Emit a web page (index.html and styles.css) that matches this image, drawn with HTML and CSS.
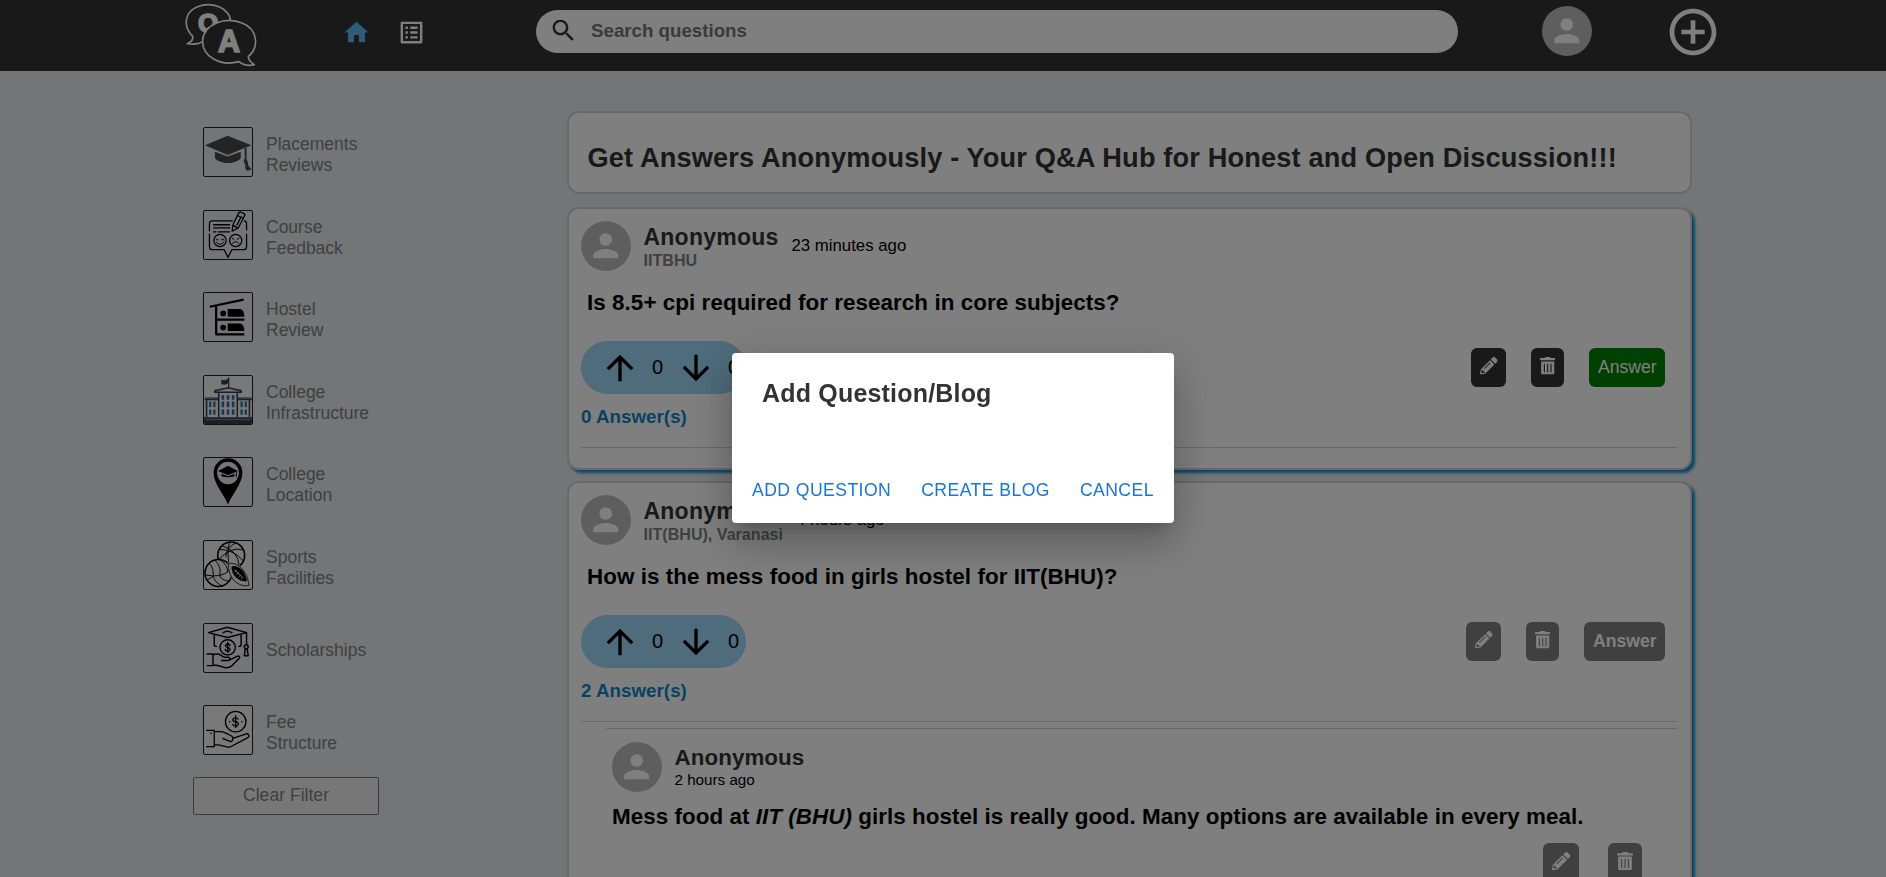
FILE: index.html
```html
<!DOCTYPE html>
<html lang="en">
<head>
<meta charset="utf-8">
<title>Q&amp;A Hub</title>
<link rel="stylesheet" href="styles.css">
</head>
<body>
<svg class="defs" aria-hidden="true">
  <symbol id="person" viewBox="0 0 24 24"><path d="M12 12c2.21 0 4-1.79 4-4s-1.79-4-4-4-4 1.79-4 4 1.79 4 4 4zm0 2c-2.67 0-8 1.34-8 4v2h16v-2c0-2.66-5.33-4-8-4z"/></symbol>
  <symbol id="up" viewBox="0 0 24 24"><path d="m4 12 1.41 1.41L11 7.83V20h2V7.83l5.58 5.59L20 12l-8-8-8 8z"/></symbol>
  <symbol id="down" viewBox="0 0 24 24"><path d="m20 12-1.41-1.41L13 16.17V4h-2v12.17l-5.58-5.59L4 12l8 8 8-8z"/></symbol>
  <symbol id="pencil" viewBox="0 0 512 512"><path d="M497.9 142.1l-46.1 46.1c-4.7 4.7-12.3 4.7-17 0l-111-111c-4.7-4.7-4.7-12.3 0-17l46.1-46.1c18.7-18.7 49.1-18.7 67.9 0l60.1 60.1c18.8 18.7 18.8 49.1 0 67.9zM284.2 99.8L21.6 362.4.4 483.9c-2.9 16.4 11.4 30.6 27.8 27.8l121.5-21.3 262.6-262.6c4.7-4.7 4.7-12.3 0-17l-111-111c-4.8-4.7-12.4-4.7-17.1 0zM124.1 339.9c-5.5-5.5-5.5-14.3 0-19.8l154-154c5.5-5.5 14.3-5.5 19.8 0s5.5 14.3 0 19.8l-154 154c-5.5 5.5-14.3 5.5-19.8 0zM88 424h48v36.3l-64.5 11.3-31.1-31.1L51.7 376H88v48z"/></symbol>
  <symbol id="trash" viewBox="0 0 448 512"><path d="M32 464a48 48 0 0 0 48 48h288a48 48 0 0 0 48-48V128H32zm272-256a16 16 0 0 1 32 0v224a16 16 0 0 1-32 0zm-96 0a16 16 0 0 1 32 0v224a16 16 0 0 1-32 0zm-96 0a16 16 0 0 1 32 0v224a16 16 0 0 1-32 0zM432 32H312l-9.4-18.7A24 24 0 0 0 281.1 0H166.8a23.72 23.72 0 0 0-21.4 13.3L136 32H16A16 16 0 0 0 0 48v32a16 16 0 0 0 16 16h416a16 16 0 0 0 16-16V48a16 16 0 0 0-16-16z"/></symbol>
</svg>

<header class="header">
  <svg class="logo" viewBox="0 0 216 192">
    <g fill="#333" stroke="#fff" stroke-width="5" stroke-linejoin="round">
      <path d="M23 100C-8 70-2 22 44 9c44-13 89 8 93 46 2 40-28 60-62 60-8 0-12-1-18-2-12 10-30 12-50 9 12-5 18-12 16-22z"/>
    </g>
    <text class="logo-letter" x="39" y="86" font-size="78">Q</text>
    <path d="M190 160c35-29 26-82-17-99-52-22-116 2-120 50-3 50 54 80 109 65 12 10 30 13 46 9-10-6-18-14-18-25z" fill="#333" stroke="#fff" stroke-width="5" stroke-linejoin="round"/>
    <text class="logo-letter" x="99" y="146" font-size="94" textLength="66" lengthAdjust="spacingAndGlyphs">A</text>
  </svg>
  <nav class="nav">
    <svg class="nav-icon home" viewBox="0 0 24 24"><path d="M10 20v-6h4v6h5v-8h3L12 3 2 12h3v8z"/></svg>
    <svg class="nav-icon" viewBox="0 0 24 24"><path d="M19 5v14H5V5h14m1.1-2H3.9c-.5 0-.9.4-.9.9v16.2c0 .4.4.9.9.9h16.2c.4 0 .9-.5.9-.9V3.9c0-.5-.5-.9-.9-.9zM11 7h6v2h-6V7zm0 4h6v2h-6v-2zm0 4h6v2h-6zM7 7h2v2H7zm0 4h2v2H7zm0 4h2v2H7z"/></svg>
  </nav>
  <div class="search">
    <svg class="search-icon" viewBox="0 0 24 24"><path d="M15.5 14h-.79l-.28-.27C15.41 12.59 16 11.11 16 9.5 16 5.91 13.09 3 9.5 3S3 5.91 3 9.5 5.91 16 9.5 16c1.61 0 3.09-.59 4.23-1.57l.27.28v.79l5 4.99L20.49 19l-4.99-5zm-6 0C7.01 14 5 11.99 5 9.5S7.01 5 9.5 5 14 7.01 14 9.5 11.99 14 9.5 14z"/></svg>
    <span>Search questions</span>
  </div>
  <span class="avatar header-avatar"><svg><use href="#person"/></svg></span>
  <svg class="add" viewBox="0 0 24 24"><path d="M13 7h-2v4H7v2h4v4h2v-4h4v-2h-4V7zm-1-5C6.48 2 2 6.48 2 12s4.48 10 10 10 10-4.48 10-10S17.52 2 12 2zm0 18c-4.41 0-8-3.59-8-8s3.59-8 8-8 8 3.59 8 8-3.59 8-8 8z"/></svg>
</header>

<div class="page">
  <aside class="sidebar">
    <ul class="topics">
      <li class="topic">
        <svg class="topic-icon" viewBox="0 0 150 150"><g fill="#484848"><path d="M3 54 74 24l74 30-74 30z"/><path d="M34 74l40 15 41-15v20c-14 21-66 21-81 0z"/><path d="M127 62h6v36c6 8 4 16 6 20 3 5 8 7 9 11-4 4-12 6-16 3-4-6-3-14-4-20-5-7-5-10-1-15z"/></g></svg>
        <span>Placements<br>Reviews</span>
      </li>
      <li class="topic">
        <svg class="topic-icon line" viewBox="0 0 150 150"><g stroke-width="4"><path d="M88 31H26q-9 0-9 9v22M17 72v40q0 9 9 9h37l12 24 12-24h37q9 0 9-9V72M133 59V40q0-8-7-9M30 43h50M30 53h50M30 65h7M44 65h36"/><circle cx="50" cy="92" r="19"/><circle cx="99" cy="92" r="19"/><path d="M88 63l2-19 19-39q3-3 7-1l9 4q4 2 2 6l-20 39zM90 44l15 9M104 14l17 8M103 44l13-26" /><path d="M38 90q3-5 7 0M54 90q4-5 8 0M38 97q12 15 24 0M88 85l6 4M110 85l-6 4M89 101q10-10 20 0" stroke-width="3"/></g></svg>
        <span>Course<br>Feedback</span>
      </li>
      <li class="topic">
        <svg class="topic-icon" viewBox="0 0 150 150"><path d="M18 43 124 21M38 42v88M38 83h88M36 129h90" fill="none" stroke="#000" stroke-width="7"/><circle cx="60" cy="64" r="9"/><circle cx="60" cy="108" r="9"/><path d="M74 50h39q13 3 13 24H74zM74 95h39q13 3 13 24H74z"/></svg>
        <span>Hostel<br>Review</span>
      </li>
      <li class="topic">
        <svg class="topic-icon paper" viewBox="0 0 150 150"><g fill="none" stroke="#3a424c" stroke-width="5"><path d="M8 74v54M142 74v54M46 52v76M104 52v76M34 51v-5l41-9 41 9v5z" fill="#e6e8ea"/><path d="M2 69h44M104 69h45M2 74h44M104 74h45M77 5v34" stroke-width="4"/></g><path d="M54 11q12 5 21-3v15q-9 7-21 2z" fill="#3a424c"/><path d="M0 129h150v21H0z" fill="#3a424c"/><path d="M4 136h142" stroke="#7c8794" stroke-width="3"/><path d="M16 80h7v18h-7zM29 80h7v18h-7zM16 105h7v16h-7zM29 105h7v16h-7zM114 80h7v18h-7zM127 80h7v18h-7zM114 105h7v16h-7zM127 105h7v16h-7zM55 60h8v14h-8zM71 60h8v14h-8zM87 60h8v14h-8zM55 80h8v18h-8zM71 80h8v18h-8zM87 80h8v18h-8zM55 105h8v16h-8zM71 105h8v16h-8zM87 105h8v16h-8z" fill="#2c6cae"/></svg>
        <span>College<br>Infrastructure</span>
      </li>
      <li class="topic">
        <svg class="topic-icon" viewBox="0 0 150 150"><path fill-rule="evenodd" d="M75 146C66 118 30 82 30 46a45 45 0 0 1 90 0c0 36-36 72-45 100zM75 12a34 35 0 1 0 0 70 34 35 0 0 0 0-70z"/><path d="M44 41l31-17 31 17-31 13zM55 49l20 8 20-8v8q-20 7-40 0z"/><path d="M101 43v17" stroke="#000" stroke-width="3"/></svg>
        <span>College<br>Location</span>
      </li>
      <li class="topic">
        <svg class="topic-icon paper" viewBox="0 0 150 150"><g fill="#f2f2f2" stroke="#000" stroke-width="5"><circle cx="85" cy="45" r="42"/><path d="M57 15q50 15 53 64M48 26q42 0 74 35M80 3q-10 28 0 84M46 58q38-42 77-30M98 6q-30 18-30 44" fill="none" stroke-width="3"/><circle cx="45" cy="100" r="42"/><path d="M34 60q22 20 15 48M16 69q14 12 13 40M50 59q24 15 24 39M3 106q24 5 46 2 20-4 36-22M49 108q3 14 32 18M28 110q8 22 30 31M10 122q8-4 18-12" fill="none" stroke-width="3"/></g><path d="M74 68c28-10 66 22 70 74-36 8-72-26-70-74z" fill="#f2f2f2"/><path d="M77 71c26-8 60 22 63 68-32 7-67-24-63-68z" fill="none" stroke="#000" stroke-width="2.5"/><path d="M86 80c20-8 44 14 48 46-22 4-50-18-48-46z"/><path d="M96 90l24 24M95 98l7-7M102 105l7-7M109 112l7-7M116 119l7-7" stroke="#f2f2f2" stroke-width="3" fill="none"/></svg>
        <span>Sports<br>Facilities</span>
      </li>
      <li class="topic">
        <svg class="topic-icon line" viewBox="0 0 150 150"><g stroke-width="4.5"><path d="M14 27 73 10l60 17-60 15zM60 27q13-9 27 0M32 34v31q0 5 7 5M116 34v31q0 5-7 5M133 27v38"/><circle cx="132" cy="71" r="6"/><path d="M129 78l-3 21h12l-3-21"/><circle cx="74" cy="73" r="24"/><path d="M10 94h18v36H10M28 96c18-6 24 0 34 8h14c6 0 6 9 0 10H55M79 113l24-12c7-3 11 2 7 6L88 130c-10 8-20 8-30 4-12-5-20-6-30-6"/><path d="M81 66q-6-6-12-2c-5 5 0 8 5 9 7 2 10 7 4 11-5 3-10 0-12-4M74 58v30"/></g></svg>
        <span>Scholarships</span>
      </li>
      <li class="topic">
        <svg class="topic-icon paper line" viewBox="0 0 150 150"><g stroke-width="4"><circle cx="99" cy="49" r="32"/><path d="M107 41q-7-7-15-2c-6 6 0 9 7 10 9 2 11 9 4 13-6 3-11 0-13-5M99 30v37M80 49h1M118 49h1"/><path d="M8 76h24v51H8M22 84v2M32 80h24c14 4 22 9 30 14 6 4 6 12 0 17-10-2-18-5-27-10M90 101l42-14c8-2 12 8 5 12L80 129c-16-2-30-8-48-8"/></g></svg>
        <span>Fee<br>Structure</span>
      </li>
    </ul>
    <button class="clear">Clear Filter</button>
  </aside>

  <main class="feed">
    <section class="card banner">Get Answers Anonymously - Your Q&amp;A Hub for Honest and Open Discussion!!!</section>

    <article class="card post">
      <div class="author">
        <span class="avatar"><svg><use href="#person"/></svg></span>
        <div class="who"><div class="name">Anonymous</div><div class="college">IITBHU</div></div>
        <span class="time">23 minutes ago</span>
      </div>
      <div class="question">Is 8.5+ cpi required for research in core subjects?</div>
      <div class="toolbar">
        <div class="votes"><svg><use href="#up"/></svg><span>0</span><svg><use href="#down"/></svg><span>0</span></div>
        <div class="actions">
          <button class="btn edit dark"><svg class="pencil"><use href="#pencil"/></svg></button>
          <button class="btn delete dark"><svg class="trash"><use href="#trash"/></svg></button>
          <button class="btn green">Answer</button>
        </div>
      </div>
      <div class="count">0 Answer(s)</div>
      <hr class="rule">
    </article>

    <article class="card post">
      <div class="author">
        <span class="avatar"><svg><use href="#person"/></svg></span>
        <div class="who"><div class="name">Anonymous</div><div class="college">IIT(BHU), Varanasi</div></div>
        <span class="time">4 hours ago</span>
      </div>
      <div class="question">How is the mess food in girls hostel for IIT(BHU)?</div>
      <div class="toolbar">
        <div class="votes"><svg><use href="#up"/></svg><span>0</span><svg><use href="#down"/></svg><span>0</span></div>
        <div class="actions">
          <button class="btn edit"><svg class="pencil"><use href="#pencil"/></svg></button>
          <button class="btn delete"><svg class="trash"><use href="#trash"/></svg></button>
          <button class="btn strong">Answer</button>
        </div>
      </div>
      <div class="count">2 Answer(s)</div>
      <hr class="rule">
      <div class="reply">
        <div class="reply-author">
          <span class="avatar"><svg><use href="#person"/></svg></span>
          <div class="who"><div class="reply-name">Anonymous</div><div class="reply-time">2 hours ago</div></div>
        </div>
        <div class="reply-text">Mess food at <em>IIT (BHU)</em> girls hostel is really good. Many options are available in every meal.</div>
        <div class="reply-actions">
          <button class="btn large"><svg class="pencil"><use href="#pencil"/></svg></button>
          <button class="btn large"><svg class="trash"><use href="#trash"/></svg></button>
        </div>
      </div>
    </article>
  </main>
</div>

<div class="backdrop">
  <div class="dialog" role="dialog">
    <h2 class="dialog-title">Add Question/Blog</h2>
    <div class="dialog-actions">
      <button class="link">Add Question</button>
      <button class="link">Create Blog</button>
      <button class="link">Cancel</button>
    </div>
  </div>
</div>
</body>
</html>
```
FILE: styles.css
```css
* { box-sizing: border-box; }
html { height: 100%; }
body {
  display: flex;
  flex-direction: column;
  height: 100%;
  margin: 0;
  overflow: hidden;
  background: #e8eaed;
  font-family: "Liberation Sans", Arial, sans-serif;
  color: #000;
}
button { font-family: inherit; border: 0; margin: 0; }
svg { display: block; flex: none; }
.defs { display: none; }

.header {
  display: flex;
  flex: none;
  align-items: flex-start;
  height: 71px;
  padding-left: 185px;
  background: #333;
}
.logo { width: 72px; height: 64px; margin-top: 3px; }
.logo-letter { font-weight: bold; fill: #fff; stroke: #fff; stroke-width: 5; }
.nav { display: flex; gap: 26px; margin: 18px 0 0 84.5px; }
.nav-icon { width: 29px; height: 29px; fill: #fff; }
.nav-icon.home { fill: #5db9f2; }
.search {
  display: flex;
  width: 922px;
  height: 43px;
  margin: 10px 0 0 110.5px;
  padding-left: 13px;
  border-radius: 22px;
  background: #fff;
  color: #757575;
  font-size: 18.72px;
  font-weight: bold;
  line-height: 42px;
}
.search-icon { width: 29px; height: 29px; margin: 6px 13px 0 0; fill: #333; }
.avatar {
  display: flex;
  flex: none;
  align-items: center;
  justify-content: center;
  width: 50px;
  height: 50px;
  border-radius: 50%;
  background: #bdbdbd;
}
.avatar svg { width: 37.5px; height: 37.5px; fill: #fff; }
.header-avatar { margin: 6px 0 0 84px; }
.add { width: 56px; height: 56px; margin: 3.5px 0 0 73px; fill: #fff; }

.page { display: flex; flex: 1; min-height: 0; overflow: hidden; padding: 40px 0 0 193px; }
.sidebar { width: 186px; margin-right: 188px; padding-top: 16px; }
.topics { margin: 0; padding: 0 0 0 10px; list-style: none; }
.topic {
  display: flex;
  align-items: center;
  gap: 13px;
  height: 50px;
  margin-bottom: 32.6px;
  color: #808080;
  font-size: 17.5px;
  line-height: 21px;
}
.topic span { padding-top: 6px; }
.topic-icon { width: 50px; height: 50px; border: 1px solid #1c1c1c; border-radius: 2px; }
.topic-icon.paper { background: #f2f2f2; }
.topic-icon.line { fill: none; stroke: #000; stroke-linecap: round; stroke-linejoin: round; }
.clear {
  display: block;
  width: 186px;
  height: 38px;
  margin-top: -11px;
  padding: 0 0 1px;
  border: 1px solid #767676;
  border-radius: 2px;
  background: #efefef;
  color: #808080;
  font-size: 17.6px;
}

.feed { display: flex; flex-direction: column; width: 1125px; }
.card {
  flex: none;
  border: 2px solid #d3d3d3;
  border-radius: 12px;
  background: #fff;
}
.banner {
  height: 83px;
  margin-bottom: 13px;
  padding: 29px 0 0 18.5px;
  color: #333;
  font-size: 27.2px;
  font-weight: bold;
  letter-spacing: .15px;
  line-height: 31px;
  white-space: nowrap;
}
.post {
  margin-bottom: 11px;
  padding: 12px 13px 20px 12px;
  box-shadow: 3px 3px 3px #0f90d0;
}
.author { display: flex; align-items: flex-start; height: 50px; }
.who { margin-left: 12.5px; padding-top: 1px; }
.name { color: #333; font-size: 23px; font-weight: bold; letter-spacing: .01em; line-height: 31px; }
.college { color: #808080; font-size: 16.1px; font-weight: bold; line-height: 14px; }
.time { margin: 13px 0 0 13px; font-size: 16.8px; line-height: 24px; }
.question { margin: 19px 0 0 6px; font-size: 22.4px; font-weight: bold; letter-spacing: .06px; line-height: 26px; }
.toolbar { display: flex; justify-content: space-between; margin-top: 25px; height: 53px; }
.votes {
  display: flex;
  align-items: center;
  width: 165px;
  padding-left: 19px;
  border-radius: 27px;
  background: #9cd8f6;
  font-size: 20px;
}
.votes svg { width: 40px; height: 40px; }
.votes span { flex: none; width: 36px; padding: 0 0 1px 12px; }
.actions { display: flex; gap: 25px; padding: 7px 12px 0 0; }
.btn {
  display: flex;
  align-items: center;
  height: 39px;
  padding: 0 9px;
  border-radius: 6px;
  background: #808080;
  color: #fff;
  font-size: 17.6px;
}
.btn svg { fill: #fff; margin-bottom: 3px; height: 1em; }
.btn .pencil { width: 1em; }
.btn .trash { width: .875em; }
.btn.edit { width: 35px; }
.btn.delete { width: 33px; }
.btn.dark { background: #333; }
.btn.green { width: 76px; padding-bottom: 1px; background: #008000; }
.btn.strong { width: 81px; padding-bottom: 1px; font-weight: bold; }
.btn.large { font-size: 18.3px; }
.count { margin-top: 12px; color: #0d86c6; font-size: 18.72px; font-weight: bold; letter-spacing: .05px; line-height: 22px; }
.rule { height: 1px; margin: 19px 0 0; border: 0; background: #d3d3d3; }
.reply { height: 200px; margin: 6px 0 0 25px; border-top: 1px solid #d3d3d3; padding: 13px 0 0 6px; }
.reply-author { display: flex; height: 50px; }
.reply-name { color: #333; font-size: 22.4px; font-weight: bold; letter-spacing: .05px; line-height: 30px; }
.reply-time { font-size: 15.2px; line-height: 14px; }
.reply-text { margin-top: 12px; font-size: 22.4px; font-weight: bold; letter-spacing: .05px; line-height: 26px; white-space: nowrap; }
.reply-actions { display: flex; justify-content: flex-end; gap: 29px; margin: 13px 35px 0 0; }

.backdrop {
  position: fixed;
  inset: 0;
  display: flex;
  align-items: center;
  justify-content: center;
  padding: 0 0 1px 20px;
  background: rgba(0, 0, 0, .5);
}
.dialog {
  width: 442px;
  height: 170px;
  padding-top: 24px;
  border-radius: 4px;
  background: #fff;
  box-shadow: 0 11px 15px -7px rgba(0,0,0,.2), 0 24px 38px 3px rgba(0,0,0,.14), 0 9px 46px 8px rgba(0,0,0,.12);
}
.dialog-title { margin: 0 0 0 30px; color: #333; font-size: 25px; letter-spacing: .0075em; line-height: 33px; }
.dialog-actions { display: flex; gap: 30px; margin: 68px 0 0 20px; }
.link {
  padding: 0;
  background: none;
  color: #1976d2;
  font-size: 17.6px;
  letter-spacing: .025em;
  line-height: 24px;
  text-transform: uppercase;
  white-space: nowrap;
}
```
